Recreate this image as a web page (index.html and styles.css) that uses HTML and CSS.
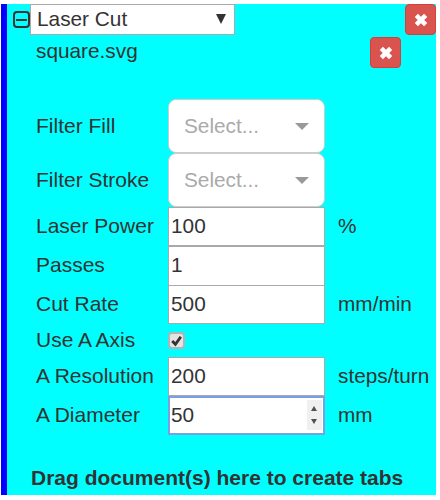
FILE: index.html
```html
<!DOCTYPE html>
<html lang="en">
<head>
  <meta charset="UTF-8" />
  <title>Laser Cut</title>
  <link rel="stylesheet" href="styles.css">
</head>
<body>
  <div class="panel">
    <div class="op-head">
      <span class="toggle"><span class="toggle-bar"></span></span>
      <div class="op-select"><span>Laser Cut</span><span class="op-arrow"></span></div>
      <button class="btn-remove"><svg viewBox="0 0 12 12"><path d="M2.5 2.5 L9.5 9.5 M9.5 2.5 L2.5 9.5"/></svg></button>
    </div>
    <div class="doc-row">
      <span class="doc-name">square.svg</span>
      <button class="btn-remove"><svg viewBox="0 0 12 12"><path d="M2.5 2.5 L9.5 9.5 M9.5 2.5 L2.5 9.5"/></svg></button>
    </div>

    <div class="fields">
      <label>Filter Fill</label>
      <div class="combo"><span>Select...</span><span class="combo-arrow"></span></div>
      <span></span>

      <label>Filter Stroke</label>
      <div class="combo"><span>Select...</span><span class="combo-arrow"></span></div>
      <span></span>

      <label>Laser Power</label>
      <div class="input">100</div>
      <span class="unit">%</span>

      <label>Passes</label>
      <div class="input input-short">1</div>
      <span></span>

      <label>Cut Rate</label>
      <div class="input">500</div>
      <span class="unit">mm/min</span>

      <label class="label-check">Use A Axis</label>
      <div class="check-cell">
        <span class="check"><svg viewBox="0 0 12 12"><path d="M2 6.5 L5 9.5 L10 2.5"/></svg></span>
      </div>
      <span></span>

      <label>A Resolution</label>
      <div class="input">200</div>
      <span class="unit">steps/turn</span>

      <label>A Diameter</label>
      <div class="input input-focus">50
        <span class="spin"><span class="spin-up"></span><span class="spin-down"></span></span>
      </div>
      <span class="unit">mm</span>
    </div>

    <p class="drop-hint">Drag document(s) here to create tabs</p>
  </div>
</body>
</html>
```

FILE: styles.css
```css
html, body {
  margin: 0;
  background: #fff;
}
body {
  padding: 4px 4px 5px 1px;
  font-family: "Liberation Sans", Arial, sans-serif;
  font-size: 20.8px;
  color: #333;
}

.panel {
  height: 491px;
  box-sizing: border-box;
  background: #0ff;
  border-left: 6px solid #00f;
  position: relative;
}

/* operation header */
.op-head {
  display: flex;
  align-items: flex-start;
  height: 31px;
}
.toggle {
  box-sizing: border-box;
  width: 17px;
  height: 17px;
  margin: 7px 0 0 6px;
  border: 2px solid #333;
  border-radius: 4px;
  display: flex;
  align-items: center;
  justify-content: center;
}
.toggle-bar {
  width: 11px;
  height: 2px;
  background: #333;
}
.op-select {
  box-sizing: border-box;
  width: 205px;
  height: 31px;
  padding: 0 8px 1px 6px;
  background: #fff;
  border: 1px solid #aaa;
  display: flex;
  align-items: center;
  justify-content: space-between;
}
.op-arrow {
  border-top: 10px solid #333;
  border-left: 5px solid transparent;
  border-right: 5px solid transparent;
}
.btn-remove {
  box-sizing: border-box;
  width: 31px;
  height: 31px;
  padding: 0;
  background: #d9534f;
  border: 1px solid #d43f3a;
  border-radius: 4px;
  display: flex;
  align-items: center;
  justify-content: center;
}
.btn-remove svg {
  width: 16px;
  height: 16px;
}
.btn-remove path {
  fill: none;
  stroke: #fff;
  stroke-width: 3.4;
}
.op-head .btn-remove {
  margin-left: auto;
}

.doc-row {
  display: flex;
  align-items: flex-start;
  height: 31px;
  margin-top: 2px;
  padding-left: 29px;
}
.doc-name {
  line-height: 28px;
  width: 334px;
}

/* field table */
.fields {
  display: grid;
  grid-template-columns: 132px 157px auto;
  grid-template-rows: 54px 54px 39px 39px 39px 33px 39px 39px;
  margin: 31px 0 0 29px;
  align-items: center;
}
.fields label, .unit {
  padding-bottom: 1px;
}
.fields label {
  font-size: 21px;
}
.combo {
  box-sizing: border-box;
  height: 54px;
  padding: 0 15px;
  background: #fff;
  border: 1px solid #ccc;
  border-radius: 8px;
  color: #aaa;
  display: flex;
  align-items: center;
  justify-content: space-between;
}
.combo-arrow {
  border-top: 7px solid #999;
  border-left: 7px solid transparent;
  border-right: 7px solid transparent;
}
.input {
  box-sizing: border-box;
  height: 39px;
  padding: 0 2px;
  line-height: 35px;
  background: #fff;
  border: 1px solid #a9a9a9;
  position: relative;
}
.input-short {
  height: 40px;
}
.input-focus {
  border-color: #7b9fe0;
  box-shadow: inset 0 0 0 1px #7b9fe0;
}
.spin {
  position: absolute;
  top: 3px;
  right: 2px;
  width: 15px;
  height: 30px;
  background: #f0f0f0;
}
.spin-up, .spin-down {
  position: absolute;
  left: 4px;
  border-left: 3.5px solid transparent;
  border-right: 3.5px solid transparent;
}
.spin-up {
  top: 6px;
  border-bottom: 5px solid #505050;
}
.spin-down {
  bottom: 6px;
  border-top: 5px solid #505050;
}
.unit {
  padding-left: 13px;
  white-space: nowrap;
}
.check-cell {
  display: flex;
  align-items: center;
}
.check {
  box-sizing: border-box;
  width: 17px;
  height: 17px;
  background: #e4e4e4;
  border: 2px solid #b3b3b3;
  border-radius: 4px;
  display: flex;
  align-items: center;
  justify-content: center;
}
.check svg {
  width: 13px;
  height: 13px;
}
.check path {
  fill: none;
  stroke: #333;
  stroke-width: 2.6;
}

.drop-hint {
  margin: 31px 0 0 24px;
  font-size: 21px;
  font-weight: bold;
  line-height: 24px;
}
```
